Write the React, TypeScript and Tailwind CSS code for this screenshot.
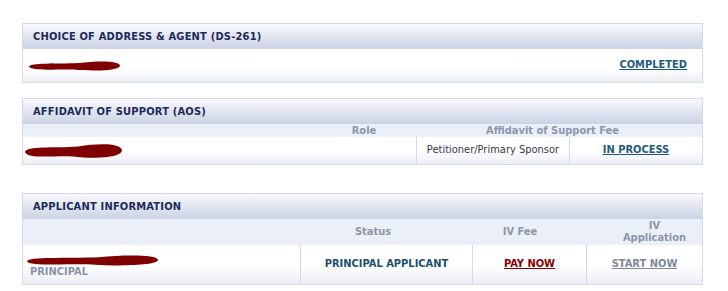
import React from 'react';

const font = "font-['DejaVu_Sans_Condensed','DejaVu_Sans',Verdana,sans-serif]";

function Blob({ w, h, className }: { w: number; h: number; className?: string }) {
  return (
    <svg width={w} height={h} viewBox={`0 0 ${w} ${h}`} className={className}>
      <path
        d={`M2 ${h * 0.55} C 4 ${h * 0.2}, ${w * 0.3} ${h * 0.35}, ${w * 0.55} ${h * 0.25} C ${w * 0.75} ${h * 0.05}, ${w - 2} ${h * 0.05}, ${w - 1} ${h * 0.45} C ${w - 1} ${h * 0.9}, ${w * 0.7} ${h * 0.95}, ${w * 0.5} ${h * 0.8} C ${w * 0.3} ${h * 0.75}, 4 ${h * 0.95}, 2 ${h * 0.55} Z`}
        fill="#7f0000"
      />
    </svg>
  );
}

function Header({ title }: { title: string }) {
  return (
    <div className="h-[25px] flex items-center pl-[10px] pt-[2px] bg-gradient-to-b from-[#f8f9fc] to-[#ccd2e5] text-[11px] font-bold tracking-[0.2px] text-[#1c2b58]">
      {title}
    </div>
  );
}

export default function App() {
  return (
    <div className={`w-[728px] h-[291px] bg-white pt-[23px] pl-[22px] ${font}`}>
      {/* Choice of address */}
      <div className="w-[681px] border border-[#d3d9e8]">
        <Header title="CHOICE OF ADDRESS & AGENT (DS-261)" />
        <div className="h-[33px] flex items-center justify-between pl-[4px] pr-[15px] bg-gradient-to-b from-white from-60% to-[#eceef5]">
          <Blob w={94} h={12} />
          <a href="#" className="text-[11px] font-bold text-[#1d5c7c] underline">COMPLETED</a>
        </div>
      </div>

      {/* Affidavit of support */}
      <div className="w-[681px] border border-[#d3d9e8] mt-[15px]">
        <Header title="AFFIDAVIT OF SUPPORT (AOS)" />
        <div className="h-[13px] flex bg-[#ebeff8] text-[11px] font-bold text-[#8d96aa] leading-[14px]">
          <div className="w-[302px]" />
          <div className="w-[78px] text-center">Role</div>
          <div className="flex-1 text-center">Affidavit of Support Fee</div>
        </div>
        <div className="h-[27px] flex bg-gradient-to-b from-white from-50% to-[#eceef5]">
          <div className="w-[393px] flex items-center">
            <Blob w={100} h={18} />
          </div>
          <div className="w-[153px] border-l border-[#d3d9e8] flex items-center justify-center text-[11px] text-[#3b3548]">
            Petitioner/Primary Sponsor
          </div>
          <div className="flex-1 border-l border-[#d3d9e8] flex items-center justify-center">
            <a href="#" className="text-[11px] font-bold text-[#1d5c7c] underline">IN PROCESS</a>
          </div>
        </div>
      </div>

      {/* Applicant information */}
      <div className="w-[681px] border border-[#d3d9e8] mt-[28px]">
        <Header title="APPLICANT INFORMATION" />
        <div className="h-[26px] flex items-center bg-[#ebeff8] text-[11px] font-bold text-[#8d96aa] leading-[12px]">
          <div className="w-[290px]" />
          <div className="w-[120px] text-center">Status</div>
          <div className="w-[174px] text-center">IV Fee</div>
          <div className="flex-1 text-center">IV<br />Application</div>
        </div>
        <div className="h-[39px] flex bg-gradient-to-b from-white from-50% to-[#eceef5]">
          <div className="w-[277px] flex flex-col justify-center pl-[2px] pt-[2px]">
            <Blob w={134} h={13} />
            <div className="pl-[5px] text-[11px] font-bold text-[#8a93a7] leading-[12px] mt-[-1px]">PRINCIPAL</div>
          </div>
          <div className="w-[172px] border-l border-[#d3d9e8] flex items-center justify-center text-[11px] font-bold text-[#1d4e6e]">
            PRINCIPAL APPLICANT
          </div>
          <div className="w-[114px] border-l border-[#d3d9e8] flex items-center justify-center">
            <a href="#" className="text-[11px] font-bold text-[#860000] underline">PAY NOW</a>
          </div>
          <div className="flex-1 border-l border-[#d3d9e8] flex items-center justify-center">
            <a href="#" className="text-[11px] font-bold text-[#7b889b] underline">START NOW</a>
          </div>
        </div>
      </div>
    </div>
  );
}
